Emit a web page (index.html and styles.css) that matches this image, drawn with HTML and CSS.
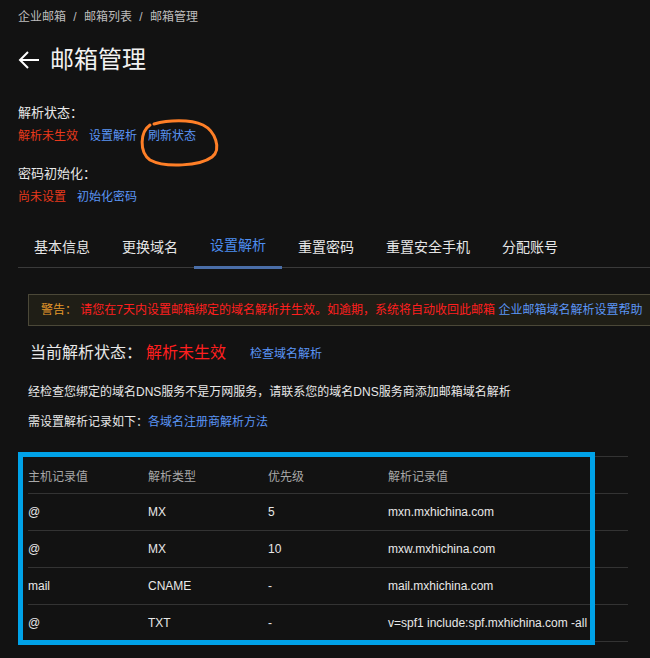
FILE: index.html
```html
<!DOCTYPE html>
<html lang="zh-CN">
<head>
    <meta charset="UTF-8">
    <title>邮箱管理</title>
    <link rel="stylesheet" href="styles.css">
</head>
<body>

    <div class="breadcrumb">企业邮箱 <span class="sep">/</span> 邮箱列表 <span class="sep">/</span> 邮箱管理</div>

    <h1 class="title">
        <svg class="back" width="22" height="18" viewBox="0 0 22 18">
            <path d="M21 9H2M10 1L2 9l8 8" fill="none" stroke="#fff" stroke-width="2"/>
        </svg>
        邮箱管理
    </h1>

    <div class="info-block">
        <div class="info-label">解析状态：</div>
        <div class="info-row">
            <span class="warn-red">解析未生效</span>
            <a class="link">设置解析</a>
            <a class="link">刷新状态</a>
        </div>
    </div>

    <div class="info-block">
        <div class="info-label">密码初始化：</div>
        <div class="info-row">
            <span class="warn-red">尚未设置</span>
            <a class="link">初始化密码</a>
        </div>
    </div>

    <div class="tabs">
        <div class="tab">基本信息</div>
        <div class="tab">更换域名</div>
        <div class="tab active">设置解析</div>
        <div class="tab">重置密码</div>
        <div class="tab">重置安全手机</div>
        <div class="tab">分配账号</div>
    </div>

    <div class="content">
        <div class="alert">
            <span class="alert-label">警告：</span>
            <span class="alert-text">请您在7天内设置邮箱绑定的域名解析并生效。如逾期，系统将自动收回此邮箱</span>
            <a class="link">企业邮箱域名解析设置帮助</a>
        </div>

        <div class="status">
            <span class="status-label">当前解析状态：</span>
            <span class="status-value">解析未生效</span>
            <a class="link">检查域名解析</a>
        </div>

        <p class="note">经检查您绑定的域名DNS服务不是万网服务，请联系您的域名DNS服务商添加邮箱域名解析</p>
        <p class="note">需设置解析记录如下：<a class="link">各域名注册商解析方法</a></p>

        <table class="records">
            <thead>
                <tr>
                    <th>主机记录值</th>
                    <th>解析类型</th>
                    <th>优先级</th>
                    <th>解析记录值</th>
                </tr>
            </thead>
            <tbody>
                <tr><td>@</td><td>MX</td><td>5</td><td>mxn.mxhichina.com</td></tr>
                <tr><td>@</td><td>MX</td><td>10</td><td>mxw.mxhichina.com</td></tr>
                <tr><td>mail</td><td>CNAME</td><td>-</td><td>mail.mxhichina.com</td></tr>
                <tr><td>@</td><td>TXT</td><td>-</td><td>v=spf1 include:spf.mxhichina.com -all</td></tr>
            </tbody>
        </table>
    </div>

    <svg class="marks" width="650" height="658" viewBox="0 0 650 658">
        <path d="M150 125 C140 132 139 152 150 160 C165 168 200 166 212 157 C222 149 215 131 203 125 C190 119 168 120 154 124"
              fill="none" stroke="#ff7f27" stroke-width="3" stroke-linecap="round"/>
        <rect x="20.5" y="454.5" width="572" height="188" fill="none" stroke="#00a2e8" stroke-width="5"/>
    </svg>

</body>
</html>
```

FILE: styles.css
```css
body {
    font-family: "Liberation Sans", "Noto Sans CJK SC", sans-serif;
    background: #121212;
    color: #e8e8e8;
    margin: 0;
    padding: 0 0 0 18px;
    width: 632px;
    height: 658px;
    overflow: hidden;
    position: relative;
}
a {
    cursor: pointer;
}
.link {
    color: #5b95f5;
}
.breadcrumb {
    font-size: 12px;
    line-height: 16px;
    color: #bdbdbd;
    margin-top: 9px;
}
.breadcrumb .sep {
    margin: 0 4px;
}
.title {
    font-size: 24px;
    font-weight: normal;
    line-height: 32px;
    margin: 19px 0 0;
    display: flex;
    align-items: center;
    gap: 10px;
    color: #f2f2f2;
}
.info-block {
    margin-top: 28px;
}
.info-block + .info-block {
    margin-top: 20px;
}
.info-label {
    font-size: 13px;
    line-height: 18px;
}
.info-row {
    font-size: 12px;
    line-height: 18px;
    margin-top: 5px;
    display: flex;
    gap: 11px;
}
.warn-red {
    color: #e8391c;
}
.tabs {
    display: flex;
    margin-top: 23px;
    border-bottom: 1px solid #3a3a3a;
}
.tab {
    font-size: 14px;
    line-height: 20px;
    padding: 8px 16px 10px;
    color: #e6e6e6;
    position: relative;
}
.tab.active {
    color: #4d8ef0;
    padding-top: 6px;
    padding-bottom: 12px;
}
.tab.active::after {
    content: "";
    position: absolute;
    left: 0;
    right: 0;
    bottom: -2px;
    height: 3px;
    background: #4a6ea8;
}
.content {
    padding-left: 10px;
}
.alert {
    margin-top: 26px;
    width: 640px;
    height: 30px;
    border: 1px solid #4b4838;
    background: #1f1e16;
    font-size: 12px;
    line-height: 30px;
    padding-left: 12px;
    white-space: nowrap;
}
.alert-label {
    color: #e5982a;
}
.alert-text {
    color: #ff1f1f;
}
.status {
    margin-top: 15px;
    padding-left: 2px;
    display: flex;
    align-items: baseline;
    line-height: 24px;
}
.status-label {
    font-size: 16px;
}
.status-value {
    font-size: 16px;
    color: #ff1f1f;
    margin-left: 4px;
}
.status .link {
    font-size: 12px;
    margin-left: 24px;
}
.note {
    font-size: 12px;
    line-height: 18px;
    margin: 0;
}
.status + .note {
    margin-top: 17px;
}
.note + .note {
    margin-top: 12px;
}
.records {
    margin-top: 25px;
    width: 600px;
    border-collapse: collapse;
    font-size: 12px;
}
.records th,
.records td {
    text-align: left;
    font-weight: normal;
    padding: 0;
    height: 36px;
    border-top: 1px solid #333;
    width: 120px;
}
.records th {
    color: #a8a8a8;
}
.records th:last-child,
.records td:last-child {
    width: auto;
}
.records tbody tr:last-child td {
    border-bottom: 1px solid #333;
}
.marks {
    position: absolute;
    left: 0;
    top: 0;
    pointer-events: none;
}
```
